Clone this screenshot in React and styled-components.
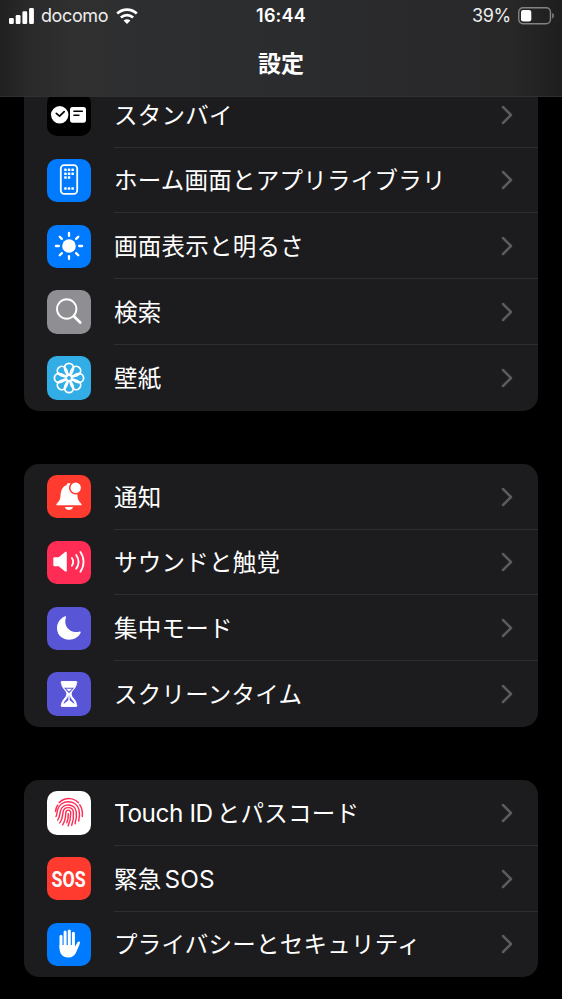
import styled, { createGlobalStyle } from "styled-components";

const GlobalStyle = createGlobalStyle`
  * {
    box-sizing: border-box;
  }

  body {
    margin: 0;
    overflow: hidden;
    background: #000;
    color: #fff;
    font-family: Inter, "Noto Sans CJK JP", sans-serif;
  }
`;

const StandbyIcon = () => (
  <Glyph>
    <circle cx="12.7" cy="21.8" r="8.7" fill="#fff" stroke="none" />
    <path d="M9.3 20.3l3.3 2.9 4.6-4.6" stroke="#000" strokeWidth="1.7" />
    <rect x="23" y="13.9" width="16" height="15.8" rx="2.6" fill="#fff" stroke="none" />
    <path d="M26.9 18.2h8.4M26.9 22.2h5" stroke="#000" strokeWidth="1.5" />
  </Glyph>
);

const HomeIcon = () => (
  <Glyph>
    <rect x="13.8" y="7.2" width="16.4" height="28.6" rx="3.4" strokeWidth="1.8" />
    {[
      [17.2, 10.6], [20.8, 10.6], [24.4, 10.6],
      [17.2, 14.4], [20.8, 14.4], [24.4, 14.4],
      [17.2, 18.2], [20.8, 18.2],
      [17.2, 29.2], [20.8, 29.2], [24.4, 29.2],
    ].map(([x, y]) => (
      <rect key={`${x}-${y}`} x={x} y={y} width="2.5" height="2.5" rx="0.5" fill="#fff" stroke="none" />
    ))}
  </Glyph>
);

const SunIcon = () => (
  <Glyph>
    <circle cx="22" cy="22" r="6.8" fill="#fff" stroke="none" />
    {[0, 45, 90, 135, 180, 225, 270, 315].map((angle) => (
      <path key={angle} d="M22 8.9v3" strokeWidth="2.3" transform={`rotate(${angle} 22 22)`} />
    ))}
  </Glyph>
);

const SearchIcon = () => (
  <Glyph>
    <circle cx="19.7" cy="19" r="9.7" strokeWidth="1.9" />
    <path d="M26.9 26.2l6.3 6.2" strokeWidth="2.8" />
  </Glyph>
);

const FlowerIcon = () => (
  <Glyph>
    {[0, 45, 90, 135, 180, 225, 270, 315].map((angle) => (
      <path
        key={angle}
        d="M20.6 19.4C18.9 16.6 17.5 14.6 17.5 11.9a4.5 4.5 0 0 1 9 0C26.5 14.6 25.1 16.6 23.4 19.4"
        strokeWidth="1.8"
        transform={`rotate(${angle} 22 22)`}
      />
    ))}
    <circle cx="22" cy="22" r="2.7" fill="#32ade6" strokeWidth="1.5" />
  </Glyph>
);

const BellIcon = () => (
  <Glyph>
    <path
      d="M9.4 30.2c-.5-2.2 3.6-3.2 4-8.2.3-7 2.4-10.7 6.1-11.8.5-3 4.5-3 5 0 4 1.2 5.8 5 6.1 11.8.4 5 4.5 6 4 8.2z"
      fill="#fff"
      stroke="none"
    />
    <path d="M17.8 32h8.2c-.8 4-7.4 4-8.2 0z" fill="#fff" stroke="none" />
    <circle cx="28.7" cy="12.8" r="6" fill="#fff" stroke="#ff3b30" strokeWidth="1.6" />
  </Glyph>
);

const SpeakerIcon = () => (
  <Glyph>
    <path
      d="M7.5 17.3h4.2l6.1-5c1.1-.9 2-.4 2 .8v17.4c0 1.2-.9 1.7-2 .8l-6.1-5H7.5c-.8 0-1.2-.4-1.2-1.2v-6.6c0-.8.4-1.2 1.2-1.2z"
      fill="#fff"
      stroke="none"
    />
    <path
      d="M24.9 17.9c1.6 2.4 1.6 5.4 0 7.8M29.2 14.9c2.9 4.2 2.9 9.6 0 13.8M33.4 11.9c4.2 6 4.2 13.8 0 19.8"
      strokeWidth="1.8"
    />
  </Glyph>
);

const MoonIcon = () => (
  <Glyph>
    <path
      d="M17.6 10.4c1.1-.5 1.7.1 1.3 1.2-2.9 8.3 3.7 16.4 13.3 14.1 1.2-.3 1.8.3 1.3 1.4C28.6 37.4 10.2 35.7 10 22c0-5.2 3.1-9.7 7.6-11.6z"
      fill="#fff"
      stroke="none"
    />
  </Glyph>
);

const HourglassIcon = () => (
  <Glyph>
    <path
      d="M14.8 9.6h14.4c.9 0 .9 1.3.2 1.9 0 4.6-5.4 7.2-5.4 10.5s5.4 5.9 5.4 10.5c.7.6.7 1.9-.2 1.9H14.8c-.9 0-.9-1.3-.2-1.9 0-4.6 5.4-7.2 5.4-10.5s-5.4-5.9-5.4-10.5c-.7-.6-.7-1.9.2-1.9z"
      fill="#fff"
      strokeWidth="1"
    />
    <path d="M17.1 15.8h9.8c-.7 1-1.5 1.9-2.3 2.7L22 21.2l-2.6-2.7c-.8-.8-1.6-1.7-2.3-2.7z" fill="#5856d6" stroke="none" />
    <path d="M18.9 16.8h6.2L22 19.6z" fill="#fff" stroke="none" />
    <path
      d="M21.3 22.6v5.6l-4.7 3.7c.2-1.7 1.3-3 2.6-4.4 1.2-1.4 1.9-2.8 2.1-4.9zM22.7 22.6v5.6l4.7 3.7c-.2-1.7-1.3-3-2.6-4.4-1.2-1.4-1.9-2.8-2.1-4.9z"
      fill="#5856d6"
      stroke="none"
    />
  </Glyph>
);

const FingerprintIcon = () => (
  <Glyph color="#ff2d55">
    <g strokeWidth="1.45">
      <path d="M12.2 11.6c6-5.5 14.4-5.2 19.2.1" />
      <path d="M8.5 20.4c.2-2.3.9-4.4 2.2-6.3M32.8 13.8c2 2.9 3 6.8 2.5 11.7" />
      <path d="M9 25.5c1.1-2.1.9-4 1.5-6.5 2.9-11 19-10.8 21.5 0 .8 3.3.7 7-.3 11" />
      <path d="M10.7 29.1c2.2-3.1 2-5.5 2.6-8.8C15 11.7 27.8 12 29.2 20.5c.7 4.2 0 8.4-1.1 12.2" />
      <path d="M12.8 31.9c3-3.8 2.8-7.3 3.2-10.6.9-6.3 9.7-6.2 10.4 0 .5 4.4-.2 8.8-1.7 13" />
      <path d="M15.6 33.8c3-4.2 3-8 3.2-11.7.1-4 4.8-4 4.9 0 .1 4.5-.7 8.9-2.6 12.8" />
      <path d="M21.3 22.8c0 3.5-.3 6.6-1.5 9" />
    </g>
  </Glyph>
);

const HandIcon = () => (
  <Glyph>
    <path d="M14 14.2v11M18.1 10v13M22.3 9.1v14M26.4 11.2v14" strokeWidth="3" />
    <path
      d="M12.5 23h15.4v1.8l2.5-4.4c.8-1.5 2.8-1.2 2.6.4-.3 1.8-2.2 5.8-3.7 9.3-1.6 3.6-4 5.5-7.9 5.5-6 0-8.9-4-8.9-9.8z"
      fill="#fff"
      stroke="none"
    />
  </Glyph>
);

const groups = [
  [
    { label: "スタンバイ", color: "#000", icon: <StandbyIcon /> },
    { label: "ホーム画面とアプリライブラリ", color: "#007aff", icon: <HomeIcon /> },
    { label: "画面表示と明るさ", color: "#007aff", icon: <SunIcon /> },
    { label: "検索", color: "#8e8e93", icon: <SearchIcon /> },
    { label: "壁紙", color: "#32ade6", icon: <FlowerIcon /> },
  ],
  [
    { label: "通知", color: "#ff3b30", icon: <BellIcon /> },
    { label: "サウンドと触覚", color: "#ff2d55", icon: <SpeakerIcon /> },
    { label: "集中モード", color: "#5856d6", icon: <MoonIcon /> },
    { label: "スクリーンタイム", color: "#5856d6", icon: <HourglassIcon /> },
  ],
  [
    { latin: "Touch ID", after: "とパスコード", color: "#fff", icon: <FingerprintIcon /> },
    { label: "緊急", latin: "SOS", color: "#ff3b30", icon: <Sos>SOS</Sos> },
    { label: "プライバシーとセキュリティ", color: "#007aff", icon: <HandIcon /> },
  ],
];

function Glyph({ color = "#fff", children }) {
  return (
    <GlyphSvg viewBox="0 0 44 44" fill="none" stroke={color} strokeLinecap="round" strokeLinejoin="round">
      {children}
    </GlyphSvg>
  );
}

function Sos({ children }) {
  return <SosText>{children}</SosText>;
}

const Row = ({ item }) => (
  <RowContainer>
    <IconTile $color={item.color}>{item.icon}</IconTile>
    <RowBody>
      <Label>
        {item.label}
        {item.latin && <Latin $leading={!item.label}>{item.latin}</Latin>}
        {item.after}
      </Label>
      <Chevron viewBox="0 0 12 20">
        <path d="M2 2l8 8-8 8" fill="none" stroke="#5b5b5f" strokeWidth="2.5" strokeLinecap="round" strokeLinejoin="round" />
      </Chevron>
    </RowBody>
  </RowContainer>
);

const App = () => (
  <Screen>
    <GlobalStyle />
    <Header>
      <StatusBar>
        <StatusSide>
          <Signal viewBox="0 0 26 16">
            <rect x="0" y="10" width="4.8" height="6" rx="1.3" />
            <rect x="6.7" y="7" width="4.8" height="9" rx="1.3" />
            <rect x="13.4" y="3.3" width="4.8" height="12.7" rx="1.3" />
            <rect x="20.1" y="0" width="4.8" height="16" rx="1.3" />
          </Signal>
          <Carrier>docomo</Carrier>
          <Wifi viewBox="0 0 22 16">
            <path d="M1.2 5.6c5.6-5.3 14-5.3 19.6 0M4.9 9.5c3.6-3.3 8.6-3.3 12.2 0" fill="none" stroke="#fff" strokeWidth="2.7" />
            <path d="M7.6 12.6c2-1.7 4.8-1.7 6.8 0L11 16z" fill="#fff" />
          </Wifi>
        </StatusSide>
        <Clock>16:44</Clock>
        <StatusSide $end>
          <Percent>39%</Percent>
          <Battery viewBox="0 0 37 18">
            <rect x="0.75" y="0.75" width="31.7" height="16" rx="4.2" fill="none" stroke="#838384" strokeWidth="1.4" />
            <rect x="3" y="3" width="10.3" height="11.5" rx="2.3" fill="#fff" />
            <path d="M34.2 6c2.3.8 2.3 4.7 0 5.5z" fill="#838384" />
          </Battery>
        </StatusSide>
      </StatusBar>
      <Title>設定</Title>
    </Header>
    <Settings>
      {groups.map((items, index) => (
        <Group key={index}>
          {items.map((item) => (
            <Row key={item.label || item.latin} item={item} />
          ))}
        </Group>
      ))}
    </Settings>
  </Screen>
);

export default App;

const Screen = styled.div`
  height: 999px;
  width: 562px;
  display: flex;
  overflow: hidden;
  flex-direction: column;
`;

const Header = styled.header`
  z-index: 1;
  height: 97px;
  flex-shrink: 0;
  position: relative;
  border-bottom: 1px solid #303032;
  background: linear-gradient(
    90deg,
    #202020 0,
    #2a2a2b 28px,
    #303031 75px,
    #2d2e2f 140px,
    #2b2c2e 300px,
    #29292b 450px,
    #272728 515px,
    #1e1e1e 562px
  );
`;

const StatusBar = styled.div`
  height: 30px;
  display: grid;
  padding: 0 9px;
  align-items: center;
  grid-template-columns: 1fr auto 1fr;
`;

const StatusSide = styled.div`
  display: flex;
  align-items: center;
  justify-content: ${({ $end }) => ($end ? "flex-end" : "flex-start")};
`;

const Signal = styled.svg`
  width: 26px;
  height: 16px;
  fill: #fff;
`;

const Carrier = styled.span`
  color: #ededed;
  font-size: 18px;
  line-height: 30px;
  margin: 1px 8px 0 6px;
  letter-spacing: -0.4px;
`;

const Wifi = styled.svg`
  width: 22px;
  height: 16px;
`;

const Clock = styled.span`
  font-size: 18px;
  font-weight: 600;
  line-height: 30px;
  padding-top: 1px;
  letter-spacing: 0.2px;
`;

const Percent = styled.span`
  color: #ededed;
  font-size: 18px;
  line-height: 30px;
  margin: 1px 7px 0 0;
  letter-spacing: -0.3px;
`;

const Battery = styled.svg`
  width: 37px;
  height: 18px;
  margin-right: -2px;
`;

const Title = styled.h1`
  margin: 0;
  font-size: 23px;
  font-weight: 700;
  line-height: 68px;
  text-align: center;
`;

const Settings = styled.main`
  gap: 52.7px;
  display: flex;
  padding: 0 24px;
  margin-top: -15.3px;
  flex-direction: column;
`;

const Group = styled.section`
  overflow: hidden;
  flex-shrink: 0;
  border-radius: 15px;
  background: #1c1c1e;
`;

const RowBody = styled.div`
  flex: 1;
  display: flex;
  align-items: center;
  padding: 1px 25px 0 0;
  justify-content: space-between;
  border-bottom: 1px solid #2e2e31;
`;

const RowContainer = styled.div`
  display: flex;
  height: 65.87px;
  padding-left: 23px;

  &:last-child ${RowBody} {
    border-bottom-color: transparent;
  }
`;

const IconTile = styled.div`
  width: 44px;
  height: 43.6px;
  display: flex;
  flex-shrink: 0;
  overflow: hidden;
  margin-right: 23px;
  align-items: center;
  align-self: center;
  border-radius: 10px;
  justify-content: center;
  background: ${({ $color }) => $color};
`;

const GlyphSvg = styled.svg`
  width: 44px;
  height: 44px;
  display: block;
  flex-shrink: 0;
`;

const SosText = styled.span`
  font-family: Roboto, sans-serif;
  font-size: 22.5px;
  font-weight: 700;
  transform: scaleX(0.79);
`;

const Label = styled.span`
  font-size: 23.5px;
  line-height: 34px;
  padding-top: 2px;
  white-space: nowrap;
  letter-spacing: 0.25px;
`;

const Latin = styled.span`
  font-size: 24.3px;
  letter-spacing: ${({ $leading }) => ($leading ? "-0.4px" : "0.2px")};
  margin-left: ${({ $leading }) => ($leading ? 0 : "3px")};
  margin-right: ${({ $leading }) => ($leading ? "4px" : 0)};
`;

const Chevron = styled.svg`
  width: 12px;
  height: 20px;
`;
